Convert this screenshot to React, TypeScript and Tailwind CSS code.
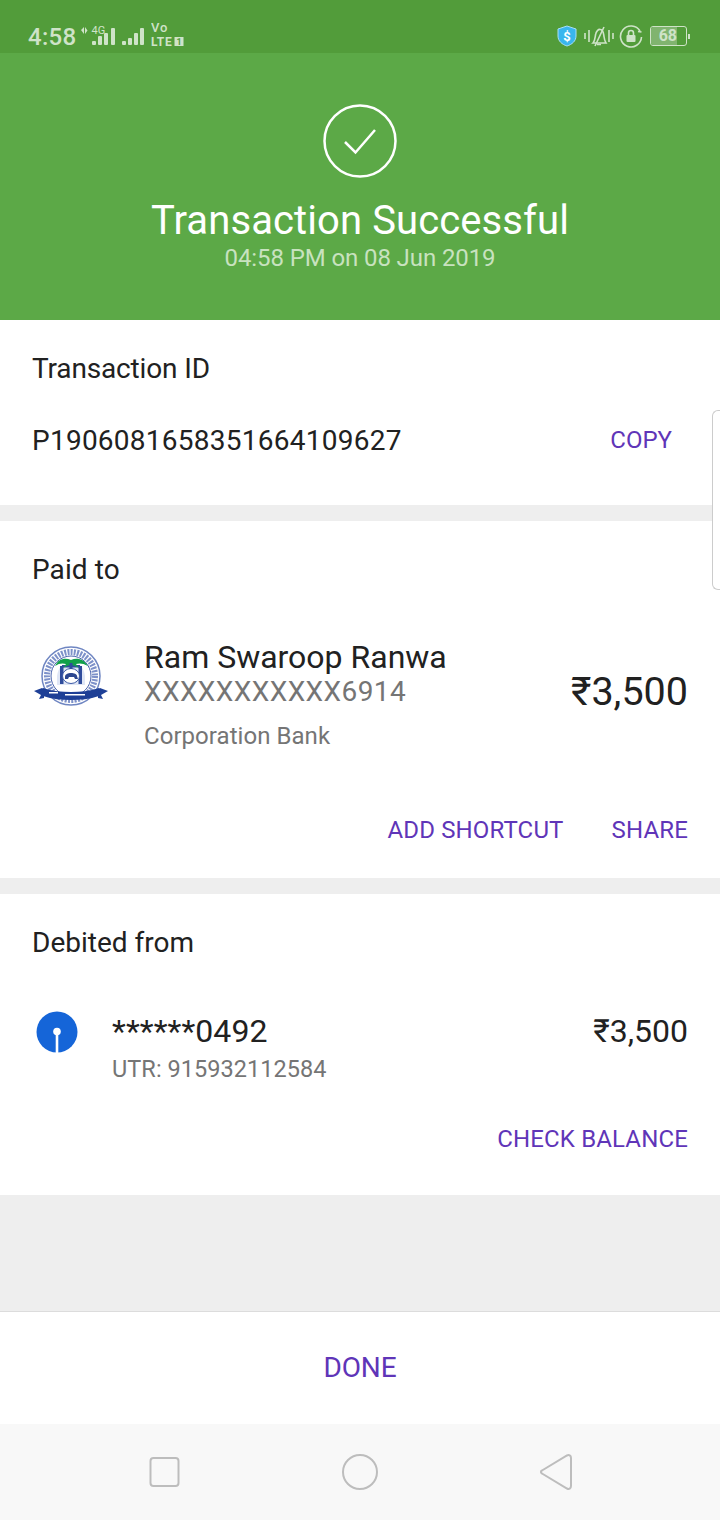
const BankLogo = () => (
  <svg width="76" height="64" viewBox="0 0 76 64" className="shrink-0">
    <circle cx="38" cy="31" r="29" fill="#fff" stroke="#6f86c2" strokeWidth="1.500" />
    <circle cx="38" cy="31" r="24" fill="none" stroke="#7d91c9" strokeWidth="6" strokeDasharray="2 1.200" />
    <circle cx="38" cy="31" r="20" fill="#fff" stroke="#4a64ad" strokeWidth="1" />
    <path d="M24 31c1-6 3-10 6-11h16c3 1 5 5 6 11v9H24z" fill="#dfe6f5" />
    <path d="M27 21h3.500v18H27zM45.500 21H49v18h-3.500z" fill="#2f4c9c" />
    <rect x="29" y="20" width="18" height="2.500" fill="#2f4c9c" />
    <ellipse cx="38" cy="31" rx="8.500" ry="7.500" fill="#fff" stroke="#3c5aa6" strokeWidth="1" />
    <path d="M32 32c0-3 3-4 6-4s6 1 6 3l1 3h-3l-1-2h-5l-1 2h-3z" fill="#2b468f" />
    <path d="M22 21c3-7 10-9 16-6 6-3 13-1 17 6-5-3-9-3-12-2l3 4c-3-2-6-3-8-3-2 0-5 1-8 3l3-4c-3-1-7-1-11 2z" fill="#12a04a" />
    <path d="M36.500 18h3v6h-3z" fill="#2f4c9c" />
    <path d="M1 46l8-3 2 1v9l-5 1 2-4z" fill="#1e3f96" />
    <path d="M75 46l-8-3-2 1v9l5 1-2-4z" fill="#1e3f96" />
    <path d="M10 43c9 3 19 4 28 4s19-1 28-4v8c-9 3-19 4-28 4s-19-1-28-4z" fill="#1e3f96" />
    <rect x="16" y="47" width="9" height="1.500" fill="#fff" />
    <rect x="32" y="49" width="20" height="1.500" fill="#fff" />
  </svg>
)

const SbiLogo = () => (
  <svg width="42" height="42" viewBox="0 0 42 42" className="shrink-0">
    <circle cx="21" cy="21" r="20.500" fill="#1565d8" />
    <circle cx="21" cy="20.500" r="3.800" fill="#fff" />
    <rect x="19.700" y="20" width="2.600" height="22" fill="#fff" />
  </svg>
)

const StatusBar = () => (
  <div className="h-[53px] bg-[#529c3a] flex items-end justify-between pb-[5px] pl-[28px] pr-[30px] text-[#cfe3c8]">
    <div className="flex items-end">
      <span className="text-[24px] leading-[28px] font-medium tracking-[0.3px] -mb-[3px]">4:58</span>
      <svg width="66" height="24" viewBox="0 0 66 24" className="ml-[4px]" fill="currentColor">
        <path d="M1 6l3-3v7zM5 3l2.500 3.500L5 10z" />
        <text x="11.500" y="10" fontSize="11" fontFamily="Roboto, sans-serif">4G</text>
        <rect x="12" y="17" width="4" height="4" rx="1" />
        <rect x="18" y="12" width="4" height="9" rx="1" />
        <rect x="24" y="9" width="4" height="12" rx="1" />
        <rect x="31" y="4" width="4" height="17" rx="1" />
        <rect x="42" y="17" width="4" height="4" rx="1" />
        <rect x="48" y="14" width="4" height="7" rx="1" />
        <rect x="54" y="9" width="4" height="12" rx="1" />
        <rect x="60" y="4" width="4" height="17" rx="1" />
      </svg>
      <svg width="33" height="28" viewBox="0 0 33 28" className="ml-[5px]" fill="currentColor" fontFamily="Roboto, sans-serif">
        <text x="0" y="12" fontSize="13" fontWeight="500" letterSpacing="0.8">Vo</text>
        <text x="0" y="26" fontSize="12" fontWeight="700" letterSpacing="0.7">LTE</text>
        <rect x="23.500" y="17" width="9" height="9" />
        <text x="28" y="25" fontSize="9" fontWeight="700" textAnchor="middle" fill="#529c3a">1</text>
      </svg>
    </div>
    <div className="flex items-center h-[24px]">
      <svg width="22" height="22" viewBox="0 0 22 22">
        <path d="M11 1l9 3v7c0 5-4 8.500-9 10-5-1.500-9-5-9-10V4z" fill="#39b6ee" stroke="#a9def5" strokeWidth="1" />
        <text x="11" y="16" textAnchor="middle" fontSize="13" fontWeight="700" fill="#fff" fontFamily="Roboto, sans-serif">$</text>
      </svg>
      <svg width="30" height="22" viewBox="0 0 30 22" fill="none" stroke="currentColor" strokeWidth="1.600" className="ml-[6px]">
        <path d="M1 8v6M5 5v12M25 5v12M29 8v6" />
        <path d="M9 18c2-2 2-5 2.500-8 .5-4 3-6 5-5.500 3 .5 3 4 3.500 7 .3 2.500 1 5 2 6.500z" />
        <path d="M20 2L11 21M13 19.500h4" />
      </svg>
      <svg width="24" height="24" viewBox="0 0 24 24" fill="none" stroke="currentColor" strokeWidth="1.600" className="ml-[5px]">
        <path d="M21 7a10.500 10.500 0 1 0 1.500 6" />
        <path d="M22.500 8l-3.500-.5" />
        <rect x="7.500" y="11" width="9" height="7" rx="1" fill="currentColor" stroke="none" />
        <path d="M9.500 11V9a2.500 2.500 0 0 1 5 0v2" />
      </svg>
      <div className="flex items-center ml-[7px]">
        <div className="w-[37px] h-[20px] rounded-[3px] border border-[#cfe3c8] flex">
          <div className="w-[26px] h-full bg-[#80b46f] flex items-center justify-end rounded-l-[2px]">
            <span className="text-[16px] leading-[18px] font-bold">68</span>
          </div>
        </div>
        <div className="w-[2px] h-[5px] bg-[#cfe3c8] ml-[1px]" />
      </div>
    </div>
  </div>
)

export default function App() {
  return (
    <div className="relative w-[720px] h-[1520px] flex flex-col bg-[#eeeeee] font-['Roboto',sans-serif] overflow-hidden">
      <StatusBar />

      <div className="h-[267px] bg-[#5ca947] flex flex-col items-center pt-[51px]">
        <svg width="74" height="74" viewBox="0 0 74 74" fill="none" stroke="#fff" strokeWidth="2.500">
          <circle cx="37" cy="37" r="35.500" />
          <path d="M22 38l10.500 10.500L52 26" />
        </svg>
        <div className="mt-[20px] text-[40px] leading-[46px] text-white tracking-[0.1px]">Transaction Successful</div>
        <div className="text-[24px] leading-[28px] text-[#c8e2bf] tracking-[-0.1px]">04:58 PM on 08 Jun 2019</div>
      </div>

      <section className="h-[185px] bg-white px-[32px] pt-[33px]">
        <div className="text-[28px] leading-[32px] text-[#212121] tracking-[-0.15px]">Transaction ID</div>
        <div className="mt-[40px] flex items-center justify-between pr-[16px]">
          <span className="text-[28px] leading-[32px] text-[#212121] tracking-[0.25px]">P1906081658351664109627</span>
          <span className="text-[24px] leading-[28px] text-[#5f35b8] -translate-y-[1px]">COPY</span>
        </div>
      </section>

      <section className="h-[357px] mt-[16px] bg-white px-[32px] pt-[33px]">
        <div className="text-[28px] leading-[32px] text-[#212121] tracking-[0.1px]">Paid to</div>
        <div className="mt-[53px] flex items-start">
          <div className="w-[111px] mt-[6px] ml-[1px]"><BankLogo /></div>
          <div className="flex-1">
            <div className="text-[32px] leading-[36px] text-[#212121]">Ram Swaroop Ranwa</div>
            <div className="mt-[1px] text-[28px] leading-[32px] text-[#757575] tracking-[0.4px]">XXXXXXXXXXX6914</div>
            <div className="mt-[14px] text-[24px] leading-[28px] text-[#757575] tracking-[0.05px]">Corporation Bank</div>
          </div>
          <div className="mt-[30px] text-[39.500px] leading-[46px] text-[#212121]">₹3,500</div>
        </div>
        <div className="mt-[66px] flex justify-end gap-[48px] text-[24px] leading-[28px] text-[#5f35b8] tracking-[0.15px]">
          <span>ADD SHORTCUT</span>
          <span>SHARE</span>
        </div>
      </section>

      <section className="h-[301px] mt-[16px] bg-white px-[32px] pt-[33px]">
        <div className="text-[28px] leading-[32px] text-[#212121]">Debited from</div>
        <div className="mt-[54px] flex items-start">
          <div className="w-[76px] -mt-[2px] ml-[4px]"><SbiLogo /></div>
          <div className="flex-1">
            <div className="text-[32px] leading-[36px] text-[#212121] tracking-[0.1px]">******0492</div>
            <div className="mt-[6px] text-[23.500px] leading-[28px] text-[#757575] tracking-[0.05px]">UTR: 915932112584</div>
          </div>
          <div className="text-[32px] leading-[36px] text-[#212121]">₹3,500</div>
        </div>
        <div className="mt-[42px] flex justify-end text-[24px] leading-[28px] text-[#5f35b8] tracking-[0.15px]">
          <span>CHECK BALANCE</span>
        </div>
      </section>

      <div className="flex-1" />

      <div className="h-[113px] bg-white border-t border-[#dcdcdc] flex items-center justify-center text-[28px] text-[#5f35b8] tracking-[-0.1px]">
        DONE
      </div>

      <div className="h-[96px] bg-[#f8f8f8] flex items-center justify-center">
        <svg width="480" height="40" viewBox="0 0 480 40" fill="none" stroke="#bdbdbd" strokeWidth="2">
          <rect x="30.500" y="6" width="28" height="28" rx="3" />
          <circle cx="240" cy="20" r="17" />
          <path d="M422 18.500l25-15c2-1 4 0 4 2.500v28c0 2.500-2 3.500-4 2.500l-25-15c-1.500-.8-1.500-2.200 0-3z" />
        </svg>
      </div>

      <div className="absolute right-0 top-[410px] w-[8px] h-[180px] bg-white border border-r-0 border-[#cccccc] rounded-l-[6px]" />
    </div>
  )
}
